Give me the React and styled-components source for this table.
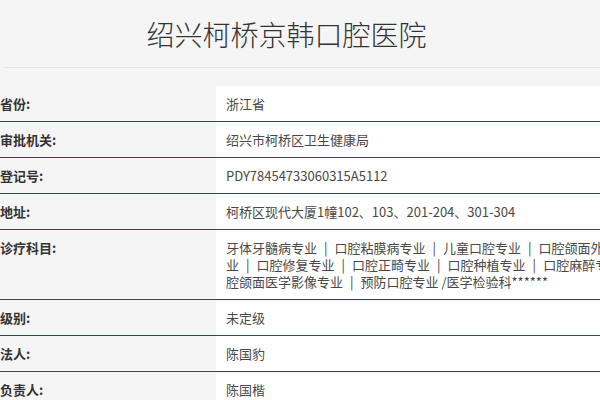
import React from "react";
import styled, { createGlobalStyle } from "styled-components";

const Global = createGlobalStyle`
  html, body { margin: 0; padding: 0; background: #f5f5f5; }
  body { font-family: "Noto Sans CJK SC", "Liberation Sans", sans-serif; }
`;

const Page = styled.div`
  width: 600px;
  height: 400px;
  overflow: hidden;
  background: #f5f5f5;
`;

const Header = styled.header`
  height: 67px;
  display: flex;
  align-items: center;
  justify-content: center;
  padding-right: 27px;
  box-sizing: border-box;
`;

const Title = styled.h1`
  margin: 0;
  font-size: 28px;
  font-weight: 300;
  color: #333;
  line-height: 1;
`;

const Divider = styled.div`
  margin-left: 5px;
  border-top: 1px solid #e6e6e6;
  margin-bottom: 18px;
`;

const Table = styled.div`
  display: flex;
  flex-direction: column;
`;

const Row = styled.div`
  display: grid;
  grid-template-columns: 216px 1fr;
  border-bottom: 1px solid #24573f;
`;

const Label = styled.div`
  padding: 9px 0;
  line-height: 17px;
  font-size: 13px;
  font-weight: 700;
  color: #333;
  background: #f5f5f5;
  white-space: nowrap;
`;

const Value = styled.div`
  padding: 9px 0 9px 10px;
  line-height: 17px;
  font-size: 13px;
  color: #484848;
  background: #fff;
  white-space: nowrap;
  overflow: hidden;
`;

const Line = styled.div`
  height: 17px;
`;

const Sep = styled.span`
  margin: 0 7px;
`;

const rows = [
  ["省份:", "浙江省"],
  ["审批机关:", "绍兴市柯桥区卫生健康局"],
  ["登记号:", "PDY78454733060315A5112"],
  ["地址:", "柯桥区现代大厦1幢102、103、201-204、301-304"],
];

const lines = [
  ["牙体牙髓病专业", "口腔粘膜病专业", "儿童口腔专业", "口腔颌面外科专业"],
  ["业", "口腔修复专业", "口腔正畸专业", "口腔种植专业", "口腔麻醉专业", "口"],
  ["腔颌面医学影像专业", "预防口腔专业 /医学检验科******"],
];

const tail = [
  ["级别:", "未定级"],
  ["法人:", "陈国豹"],
  ["负责人:", "陈国楷"],
];

export default function App() {
  return (
    <Page>
      <Global />
      <Header>
        <Title>绍兴柯桥京韩口腔医院</Title>
      </Header>
      <Divider />
      <Table>
        {rows.map(([l, v]) => (
          <Row key={l}>
            <Label>{l}</Label>
            <Value>{v}</Value>
          </Row>
        ))}
        <Row>
          <Label>诊疗科目:</Label>
          <Value>
            {lines.map((parts, i) => (
              <Line key={i}>
                {parts.map((p, j) => (
                  <React.Fragment key={j}>
                    {j > 0 && <Sep>|</Sep>}
                    {p}
                  </React.Fragment>
                ))}
              </Line>
            ))}
          </Value>
        </Row>
        {tail.map(([l, v]) => (
          <Row key={l}>
            <Label>{l}</Label>
            <Value>{v}</Value>
          </Row>
        ))}
      </Table>
    </Page>
  );
}
